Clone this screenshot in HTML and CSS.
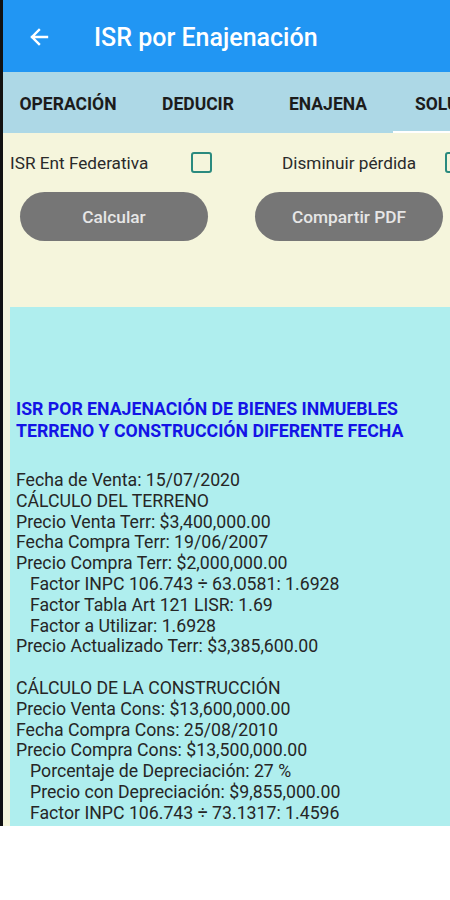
FILE: index.html
```html
<!DOCTYPE html>
<html lang="es">
<head>
  <meta charset="UTF-8">
  <title>ISR por Enajenación</title>
  <link rel="stylesheet" href="styles.css">
</head>
<body>

  <div class="phone">
    <header class="app-bar">
      <svg class="back" width="24" height="24" viewBox="0 0 24 24">
        <path d="M20 12H5M12 5l-7 7 7 7" fill="none" stroke="#fff" stroke-width="2.4" stroke-linecap="square"/>
      </svg>
      <h1>ISR por Enajenación</h1>
    </header>

    <nav class="tabs">
      <div class="tab">OPERACIÓN</div>
      <div class="tab">DEDUCIR</div>
      <div class="tab">ENAJENA</div>
      <div class="tab active">SOLUCIÓN</div>
    </nav>

    <section class="controls">
      <div class="checks">
        <label class="check-group first">ISR Ent Federativa <span class="checkbox"></span></label>
        <label class="check-group second">Disminuir pérdida <span class="checkbox"></span></label>
      </div>
      <div class="buttons">
        <button>Calcular</button>
        <button>Compartir PDF</button>
      </div>
    </section>

    <section class="result">
      <p class="heading">ISR POR ENAJENACIÓN DE BIENES INMUEBLES<br>TERRENO Y CONSTRUCCIÓN DIFERENTE FECHA</p>
      <div class="lines">
        <div>Fecha de Venta: 15/07/2020</div>
        <div>CÁLCULO DEL TERRENO</div>
        <div>Precio Venta Terr: $3,400,000.00</div>
        <div>Fecha Compra Terr: 19/06/2007</div>
        <div>Precio Compra Terr: $2,000,000.00</div>
        <div class="indent">Factor INPC 106.743 ÷ 63.0581: 1.6928</div>
        <div class="indent">Factor Tabla Art 121 LISR: 1.69</div>
        <div class="indent">Factor a Utilizar: 1.6928</div>
        <div>Precio Actualizado Terr: $3,385,600.00</div>
        <div class="blank"></div>
        <div>CÁLCULO DE LA CONSTRUCCIÓN</div>
        <div>Precio Venta Cons: $13,600,000.00</div>
        <div>Fecha Compra Cons: 25/08/2010</div>
        <div>Precio Compra Cons: $13,500,000.00</div>
        <div class="indent">Porcentaje de Depreciación: 27 %</div>
        <div class="indent">Precio con Depreciación: $9,855,000.00</div>
        <div class="indent">Factor INPC 106.743 ÷ 73.1317: 1.4596</div>
      </div>
    </section>
  </div>

</body>
</html>
```

FILE: styles.css
```css
body {
  margin: 0;
  background: #fff;
  font-family: Roboto, "Noto Sans", sans-serif;
  overflow: hidden;
}

.phone {
  width: 447px;
  height: 826px;
  border-left: 3px solid #111;
  display: flex;
  flex-direction: column;
  overflow: hidden;
  background: #f5f5dc;
}

.app-bar {
  height: 72px;
  flex-shrink: 0;
  background: #2196f3;
  display: flex;
  align-items: center;
  padding-left: 24px;
}

.back {
  margin-top: 2px;
}

.app-bar h1 {
  margin: 0 0 0 43px;
  color: #fff;
  font-size: 25px;
  font-weight: 500;
  padding-top: 3px;
  white-space: nowrap;
}

.tabs {
  height: 61px;
  flex-shrink: 0;
  background: #add8e6;
  display: flex;
}

.tab {
  flex: 0 0 130px;
  display: flex;
  align-items: center;
  justify-content: center;
  font-size: 17.5px;
  font-weight: 700;
  color: #1c1c1c;
  box-sizing: border-box;
  padding-top: 2px;
  white-space: nowrap;
}

.tab.active {
  border-bottom: 2px solid #fff;
  padding-top: 4px;
  padding-left: 22px;
  justify-content: flex-start;
}

.controls {
  height: 174px;
  flex-shrink: 0;
}

.checks {
  display: flex;
  padding: 19px 0 0 7px;
  gap: 70px;
  font-size: 17.2px;
  color: #2a2a2a;
}

.check-group {
  display: flex;
  align-items: center;
  justify-content: space-between;
  flex-shrink: 0;
  white-space: nowrap;
}

.check-group.first {
  width: 202px;
}

.check-group.second {
  width: 184px;
}

.checkbox {
  width: 17px;
  height: 17px;
  border: 2.5px solid #2a8a7e;
  border-radius: 3px;
}

.buttons {
  display: flex;
  gap: 47px;
  padding: 19px 0 0 17px;
}

button {
  width: 188px;
  height: 49px;
  flex-shrink: 0;
  border: none;
  border-radius: 25px;
  background: #767676;
  color: #e6e6e6;
  font-family: Roboto, sans-serif;
  font-size: 17.3px;
  font-weight: 500;
}

.result {
  flex: 1;
  margin-left: 7px;
  background: #afeeee;
  padding: 92px 0 0 6px;
  overflow: hidden;
}

.heading {
  margin: 0;
  color: #1414e6;
  font-size: 17.7px;
  font-weight: 700;
  line-height: 21.5px;
  white-space: nowrap;
}

.lines {
  margin-top: 28px;
  font-size: 17.7px;
  line-height: 20.8px;
  color: #262626;
  white-space: nowrap;
}

.indent {
  padding-left: 14px;
}

.blank {
  height: 20.8px;
}
```
